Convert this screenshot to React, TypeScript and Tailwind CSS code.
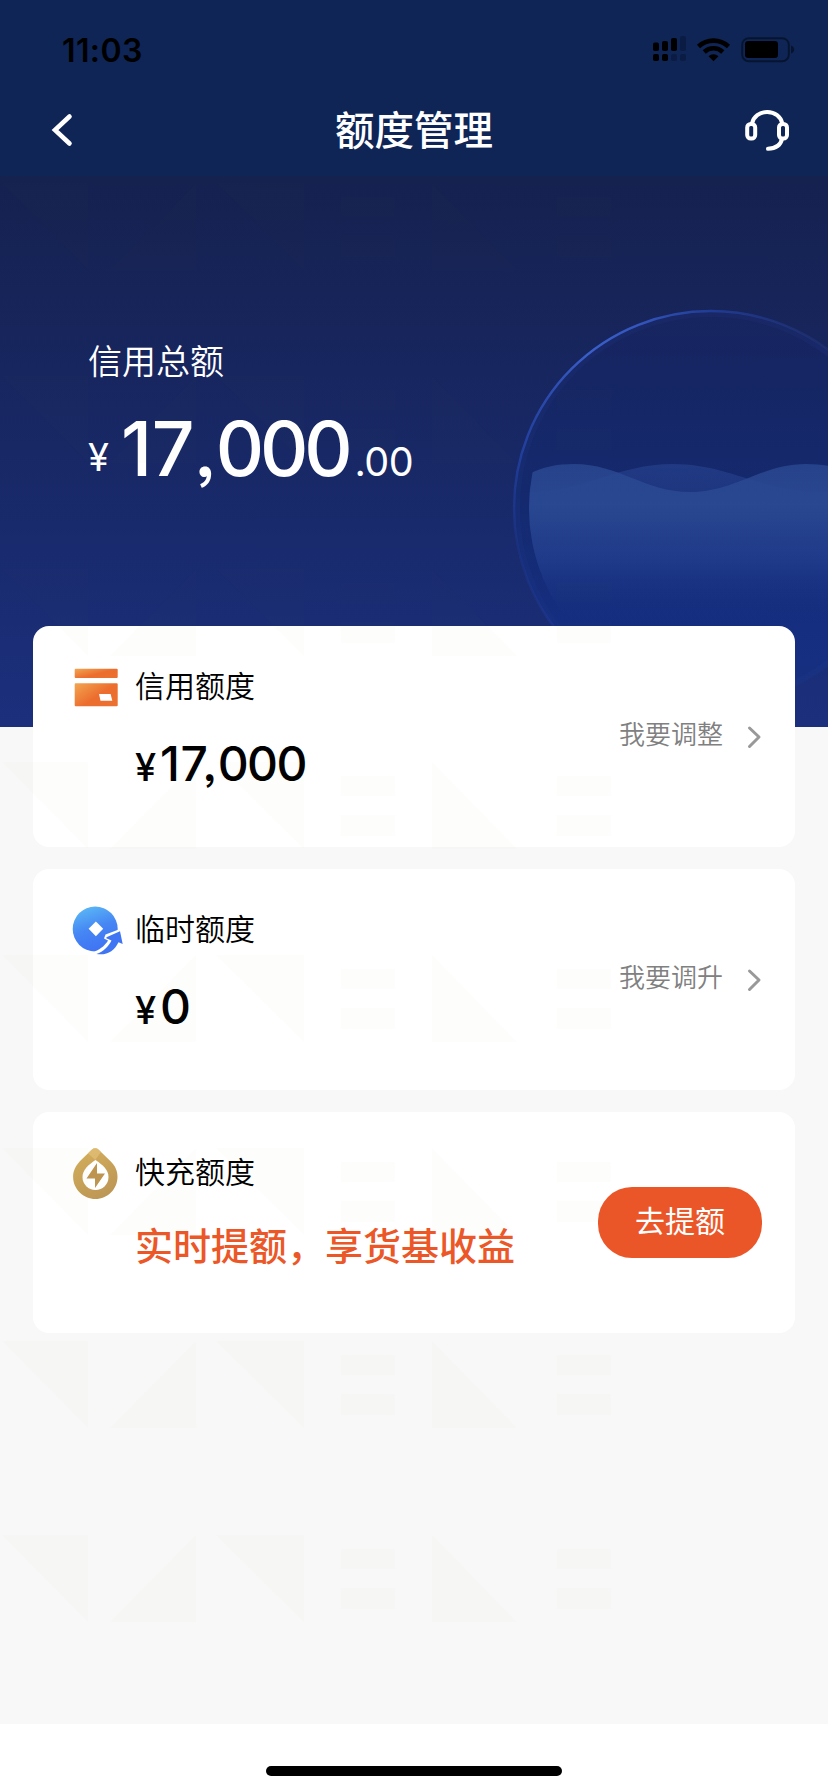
import type { ReactNode } from "react";

const WATERMARK_ROWS = [183, 376, 569, 762, 955, 1148, 1341, 1535];

function StatusIcons() {
  return (
    <svg className="absolute top-[34px] left-[650px] h-[30px] w-[146px]" viewBox="650 34 146 30">
      <g fill="#000">
        <rect x="653" y="42.5" width="6" height="8.5" rx="1.8" />
        <rect x="662" y="41" width="6" height="10" rx="1.8" />
        <rect x="671" y="38" width="6" height="13" rx="1.8" />
        <rect x="653" y="54" width="6" height="7" rx="1.8" />
        <rect x="662" y="54" width="6" height="7" rx="1.8" />
        <rect x="680" y="36" width="6" height="15" rx="1.8" opacity=".22" />
        <rect x="671" y="54" width="6" height="7" rx="1.8" opacity=".22" />
        <rect x="680" y="54" width="6" height="7" rx="1.8" opacity=".22" />
      </g>
      <g fill="none" stroke="#000" strokeWidth="4.6">
        <path d="M698.5 46.5a22 22 0 0 1 30 0" />
        <path d="M704.2 52a13.6 13.6 0 0 1 18.6 0" />
      </g>
      <path d="M713.5 61.2l-5-5a7.2 7.2 0 0 1 10 0z" fill="#000" />
      <rect x="742.2" y="38.2" width="46.6" height="23" rx="6.5" fill="none" stroke="#000" strokeOpacity=".45" strokeWidth="2" />
      <rect x="745" y="41" width="33" height="17" rx="3.2" fill="#000" />
      <path d="M791 45.5c2.6 1 3.2 2.600 3.200 4s-.6 3-3.200 4z" fill="#000" fillOpacity=".45" />
    </svg>
  );
}

function Globe() {
  return (
    <svg className="absolute top-0 left-0 h-full w-full" viewBox="0 176 828 551" aria-hidden="true">
      <defs>
        <linearGradient id="ball" x1="0" y1="310" x2="0" y2="706" gradientUnits="userSpaceOnUse">
          <stop offset="0" stopColor="#17245f" />
          <stop offset=".45" stopColor="#14296d" />
          <stop offset=".8" stopColor="#152e80" />
          <stop offset="1" stopColor="#18307f" />
        </linearGradient>
        <linearGradient id="rim" x1="513" y1="0" x2="828" y2="0" gradientUnits="userSpaceOnUse">
          <stop offset="0" stopColor="#2443a8" stopOpacity=".75" />
          <stop offset=".24" stopColor="#3b5fca" />
          <stop offset=".4" stopColor="#3456bd" />
          <stop offset=".65" stopColor="#22409e" stopOpacity=".8" />
          <stop offset="1" stopColor="#2a3a7c" stopOpacity=".35" />
        </linearGradient>
        <linearGradient id="rimFade" x1="0" y1="310" x2="0" y2="706" gradientUnits="userSpaceOnUse">
          <stop offset="0" stopColor="#fff" />
          <stop offset=".35" stopColor="#fff" />
          <stop offset=".6" stopColor="#444" />
          <stop offset="1" stopColor="#333" />
        </linearGradient>
        <mask id="rimMask" maskUnits="userSpaceOnUse" x="480" y="280" width="460" height="460">
          <rect x="480" y="280" width="460" height="460" fill="url(#rimFade)" />
        </mask>
        <linearGradient id="water" x1="0" y1="464" x2="0" y2="625" gradientUnits="userSpaceOnUse">
          <stop offset="0" stopColor="#2b4b94" stopOpacity=".75" />
          <stop offset=".25" stopColor="#2a4892" stopOpacity=".95" />
          <stop offset=".6" stopColor="#1f3b8a" stopOpacity=".9" />
          <stop offset="1" stopColor="#152e80" stopOpacity="0" />
        </linearGradient>
        <linearGradient id="waterBack" x1="0" y1="464" x2="0" y2="600" gradientUnits="userSpaceOnUse">
          <stop offset="0" stopColor="#2c4b9a" stopOpacity=".5" />
          <stop offset="1" stopColor="#2c4b9a" stopOpacity="0" />
        </linearGradient>
        <clipPath id="inner">
          <circle cx="711" cy="508" r="182" />
        </clipPath>
      </defs>
      <circle cx="711" cy="508" r="197" fill="url(#ball)" />
      <circle cx="711" cy="508" r="194" fill="none" stroke="#2a4598" strokeOpacity=".12" strokeWidth="6" />
      <g clipPath="url(#inner)">
        <path d="M529 492C585 492 617 464 673 464S762 492 818 492h12v220H529z" fill="url(#waterBack)" />
        <path d="M529 474C543 467 556 464 574 464C619 464 645 492 690 492S761 464 806 464c9 0 16 1 24 2v246H529z" fill="url(#water)" />
      </g>
      <circle cx="711" cy="508" r="197" fill="none" stroke="url(#rim)" strokeWidth="2.4" mask="url(#rimMask)" />
    </svg>
  );
}

function Watermark() {
  return (
    <svg className="pointer-events-none absolute top-0 left-0 h-[1792px] w-[828px]" viewBox="0 0 828 1792" aria-hidden="true">
      <g fill="#848c32" fillOpacity=".016">
        {WATERMARK_ROWS.map((y) => (
          <g key={y} transform={`translate(0 ${y})`}>
            <path d="M2 0H88V87zM110 87L196 0V87zM216 0H304V87zM432 0V87H517z" />
            <path d="M341 14h54v20h-54zM341 53h54v21h-54zM557 14h54v20h-54zM557 53h54v21h-54z" />
          </g>
        ))}
      </g>
    </svg>
  );
}

function CardIcon() {
  return (
    <svg className="h-[50px] w-[50px]" viewBox="0 0 50 50">
      <defs>
        <linearGradient id="orange" x1="0" y1="0" x2="1" y2=".8">
          <stop offset="0" stopColor="#f2a652" />
          <stop offset=".6" stopColor="#ec6d2e" />
          <stop offset="1" stopColor="#ec7030" />
        </linearGradient>
      </defs>
      <rect x="2.700" y="6.800" width="43" height="9.200" rx="1" fill="url(#orange)" />
      <path fillRule="evenodd" d="M3.700 21.200h41a1 1 0 0 1 1 1v21a1 1 0 0 1-1 1h-41a1 1 0 0 1-1-1v-21a1 1 0 0 1 1-1zM27 32l1.500 6.700H40.300L38.600 32z" fill="url(#orange)" />
    </svg>
  );
}

function CoinIcon() {
  return (
    <svg className="h-[50px] w-[52px] overflow-visible" viewBox="-0.500 1 52 50">
      <defs>
        <linearGradient id="blue" x1=".25" y1="0" x2=".6" y2="1">
          <stop offset="0" stopColor="#5bb8f5" />
          <stop offset=".5" stopColor="#4586f4" />
          <stop offset="1" stopColor="#3f72f3" />
        </linearGradient>
      </defs>
      <circle cx="22.700" cy="25" r="22.500" fill="url(#blue)" />
      <path d="M23.400 17.400l7.300 7.300-7.300 7.600-7.300-7.600z" fill="#fff" />
      <path d="M22 47.500C29 45 33.500 40 35.500 36.500L31.500 34.500 33 30.500 49 24.500 54 42 46 41C42 50 33 55 22 53z" fill="#fff" />
      <path d="M24 50C31 47.500 36 42.500 39 36.500L33.800 34.300Q33.500 33.500 34.500 33L47.500 27.200 50.200 40 46 38.200C41.500 47 35 51.500 24 50z" fill="#3f74f3" />
    </svg>
  );
}

function DropIcon() {
  return (
    <svg className="h-[52px] w-[50px]" viewBox="-1.500 0.500 50 52">
      <defs>
        <linearGradient id="gold" x1="0" y1="0" x2=".6" y2="1">
          <stop offset="0" stopColor="#d8b15d" />
          <stop offset="1" stopColor="#bd9755" />
        </linearGradient>
      </defs>
      <path d="M18.200 2.200c2-1.800 5-1.800 7 0l11.600 11.300C41.500 18 44 23 44 29.200 44 41.500 34 51.500 22 51.500S-.4 41.500-.4 29.200C-.4 23 2.500 18 6.600 13.500z" fill="url(#gold)" />
      <path d="M21.700 12.500L27.500 4.500l-2.300-2.300c-2-1.800-5-1.800-7 0l-3.800 3.600z" fill="#e3c078" opacity=".7" />
      <path d="M22 12.500c7 5 13 9.500 13 17a13 13 0 0 1-26 0c0-7.500 6-12 13-17z" fill="#fff" />
      <path d="M23.500 15.500L13 31h8.500v9.500L31.500 26H23.500z" fill="#bd9450" />
    </svg>
  );
}

function QuotaCard({ icon, title, children, action }: { icon: ReactNode; title: string; children: ReactNode; action: ReactNode }) {
  return (
    <section className="flex h-[221px] items-start rounded-2xl bg-white pr-[33px] pl-[39px]">
      <div className="mt-[36px] w-[63px] shrink-0">{icon}</div>
      <div className="flex-1 pt-[36px]">
        <h2 className="text-[30px] leading-[44px] font-[350] text-black">{title}</h2>
        {children}
      </div>
      {action}
    </section>
  );
}

function Amount({ children }: { children: ReactNode }) {
  return (
    <p className="mt-[28px] flex items-baseline font-['Inter'] leading-[60px] font-medium text-black [font-feature-settings:'ss03']">
      <span className="w-[25px] text-[38px] tracking-[-1px]">¥</span>
      <span className="text-[48px] font-[450] tracking-[-1.6px]">{children}</span>
    </p>
  );
}

function AdjustLink({ label }: { label: string }) {
  return (
    <button className="mt-[87px] flex items-center text-[26px] leading-[40px] font-[350] text-[#808080]">
      {label}
      <svg className="mt-[8px] ml-[24px] h-[24px] w-[15px]" viewBox="0 0 15 24" fill="none" stroke="#999" strokeWidth="3" strokeLinecap="round" strokeLinejoin="round">
        <path d="M2.500 3l9.500 9-9.500 9.500" />
      </svg>
    </button>
  );
}

export default function App() {
  return (
    <main className="relative flex h-[1792px] w-[828px] flex-col overflow-hidden bg-[#f8f8f8] font-['Noto_Sans_CJK_SC',sans-serif]">
      <header className="relative h-[176px] bg-[#0e2556]">
        <div className="pt-[35px] pl-[62px] font-['Inter'] text-[32px] leading-[32px] font-semibold tracking-[0.4px] text-black">11:03</div>
        <StatusIcons />
        <nav className="mt-[35px] grid h-[56px] grid-cols-[1fr_auto_1fr] items-center pr-[38px] pl-[50px]">
          <svg className="h-[36px] w-[46px]" viewBox="0 0 46 36" fill="none" stroke="#fff" strokeWidth="4.6" strokeLinecap="round">
            <path d="M19.500 4.500L5 18l14.500 13.500" strokeLinejoin="miter" />
          </svg>
          <h1 className="mr-[12px] -mt-[4px] text-[39.500px] leading-[56px] font-medium text-white">额度管理</h1>
          <svg className="h-[44px] w-[46px] justify-self-end" viewBox="0 0 46 44" fill="none" stroke="#fff" strokeWidth="4" strokeLinecap="round">
            <rect x="3.200" y="16" width="8" height="14.500" rx="3.500" />
            <rect x="35" y="16" width="8" height="14.500" rx="3.500" />
            <path d="M8 15.500C9.500 8.500 15.500 4 23.200 4S36.800 8.500 38.300 15.500M38 31c-1.500 6.500-7 9.500-14 9.800" />
          </svg>
        </nav>
      </header>

      <section className="relative h-[551px] shrink-0 bg-linear-to-b from-[#15214f] to-[#1b2f7d] pt-[156px] pl-[88px] text-white">
        <Globe />
        <h2 className="relative text-[34px] leading-[56px] font-[350]">信用总额</h2>
        <p className="relative mt-[16px] flex items-baseline font-['Inter'] leading-[90px] [font-feature-settings:'ss03']">
          <span className="relative -top-[5px] w-[24px] text-[38px] tracking-[-1px]">¥</span>
          <span className="ml-[9px] text-[75px] font-medium tracking-[-4.2px]">
            <span className="tracking-[-0.5px]">17</span>
            <span className="tracking-[-1px]">,</span>000
          </span>
          <span className="ml-[6px] text-[39.500px] tracking-[-0.5px]">.00</span>
        </p>
      </section>

      <div className="relative -mt-[101px] flex flex-col gap-[22px] px-[33px]">
        <QuotaCard icon={<CardIcon />} title="信用额度" action={<AdjustLink label="我要调整" />}>
          <Amount>
            <span className="tracking-[0.6px]">17,</span>000
          </Amount>
        </QuotaCard>
        <QuotaCard icon={<CoinIcon />} title="临时额度" action={<AdjustLink label="我要调升" />}>
          <Amount>0</Amount>
        </QuotaCard>
        <QuotaCard
          icon={<DropIcon />}
          title="快充额度"
          action={
            <button className="mt-[75px] h-[71px] w-[164px] rounded-[34px] bg-[#eb5628] pb-[8px] text-[30px] leading-[44px] text-white">
              去提额
            </button>
          }
        >
          <p className="mt-[24px] text-[38px] leading-[56px] font-medium whitespace-nowrap text-[#ec5728]">实时提额，享货基收益</p>
        </QuotaCard>
      </div>

      <Watermark />

      <footer className="relative mt-auto flex h-[68px] items-end justify-center bg-white pb-[16px]">
        <div className="h-[10px] w-[296px] rounded-full bg-black" />
      </footer>
    </main>
  );
}
